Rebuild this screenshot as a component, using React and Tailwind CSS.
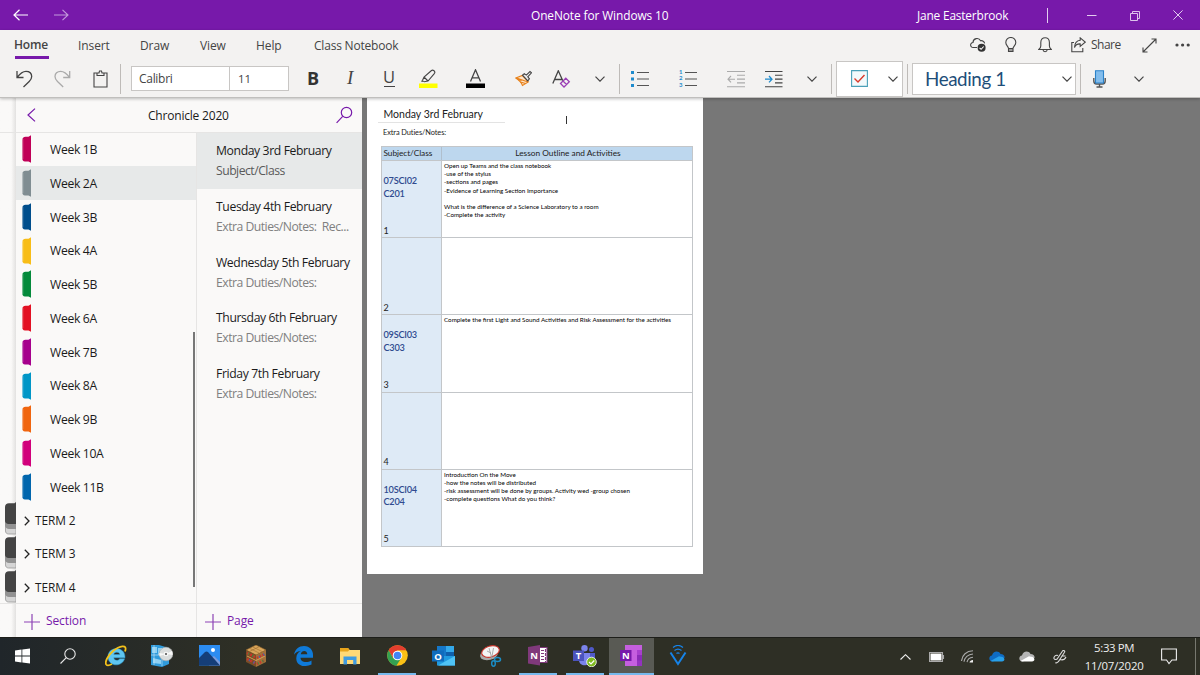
import React from "react";
import clsx from "clsx";

const sections = [
  { name: "Week 1B", color: "#c00057" },
  { name: "Week 2A", color: "#808d92" },
  { name: "Week 3B", color: "#004e8c" },
  { name: "Week 4A", color: "#f8bd17" },
  { name: "Week 5B", color: "#048a3b" },
  { name: "Week 6A", color: "#e31123" },
  { name: "Week 7B", color: "#a6008d" },
  { name: "Week 8A", color: "#0096c7" },
  { name: "Week 9B", color: "#f0650f" },
  { name: "Week 10A", color: "#d1007b" },
  { name: "Week 11B", color: "#0166ad" },
];

const groups = ["TERM 2", "TERM 3", "TERM 4"];

const pages = [
  { title: "Monday 3rd February", preview: "Subject/Class" },
  { title: "Tuesday 4th February", preview: "Extra Duties/Notes:\u00a0 Rec..." },
  { title: "Wednesday 5th February", preview: "Extra Duties/Notes:" },
  { title: "Thursday 6th February", preview: "Extra Duties/Notes:" },
  { title: "Friday 7th February", preview: "Extra Duties/Notes:" },
];

const lessons = [
  {
    code: "07SCI02",
    room: "C201",
    lines: [
      "Open up Teams and the class notebook",
      "-use of the stylus",
      "-sections and pages",
      "-Evidence of Learning Section Importance",
      "",
      "What is the difference of a Science Laboratory to a room",
      "-Complete the activity",
    ],
  },
  { code: "", room: "", lines: [] },
  {
    code: "09SCI03",
    room: "C303",
    lines: ["Complete the first Light and Sound Activities and Risk Assessment for the activities"],
  },
  { code: "", room: "", lines: [] },
  {
    code: "10SCI04",
    room: "C204",
    lines: [
      "Introduction On the Move",
      "-how the notes will be distributed",
      "-risk assessment will be done by groups. Activity wed -group chosen",
      "-complete questions What do you think?",
    ],
  },
];

const Svg = ({ w, h, className, children }) => (
  <svg
    width={w}
    height={h}
    viewBox={`0 0 ${w} ${h}`}
    fill="none"
    stroke="#444"
    strokeWidth="1.1"
    className={clsx("shrink-0", className)}
  >
    {children}
  </svg>
);

const Chevron = ({ className }) => (
  <Svg w={10} h={6} className={className}>
    <path d="M.5.7 5 5.2 9.5.7" stroke="#444" strokeWidth="1.2" />
  </Svg>
);

const Divider = ({ className }) => <div className={clsx("h-[30px] w-px shrink-0 bg-[#bebbb8]", className)} />;

const TitleBar = () => (
  <header className="flex h-[30px] items-center bg-[#7719aa] text-[11.9px] tracking-[-0.1px] text-white">
    <Svg w={15} h={12} className="ml-[13px]">
      <path d="M15 6H1M6.5.8 1 6l5.500 5.200" stroke="#fff" strokeWidth="1.2" />
    </Svg>
    <Svg w={15} h={12} className="ml-[26px]">
      <path d="M0 6h14M8.500.8 14 6l-5.500 5.200" stroke="#c49bdc" strokeWidth="1.1" />
    </Svg>
    <span className="ml-[462px] w-[386px] whitespace-nowrap pt-[2px]">OneNote for Windows 10</span>
    <span className="w-[130px] whitespace-nowrap pt-[2px] tracking-[-0.18px]">Jane Easterbrook</span>
    <div className="h-[15px] w-px bg-[#e3cdef]" />
    <Svg w={10} h={10} className="ml-[39px]">
      <path d="M0 5.500h9.500" stroke="#e3cdef" strokeWidth="1" />
    </Svg>
    <Svg w={11} h={11} className="ml-[33px]">
      <path d="M.5 3.500h7v7h-7zM2.500 3.500v-2h7v7h-2" stroke="#ddc3ec" strokeWidth="1" />
    </Svg>
    <Svg w={10} h={10} className="ml-[32px]">
      <path d="m.4.4 9.200 9.200M9.600.4.4 9.600" stroke="#e3cdef" strokeWidth="1" />
    </Svg>
  </header>
);

const Tabs = () => (
  <nav className="flex h-[30px] items-center text-[12px] tracking-[-0.1px] text-[#444]">
    <div className="ml-[14px] w-[64px] pt-[5px]">
      <span className="block leading-[17px] font-semibold tracking-[-0.2px]">Home</span>
      <div className="ml-px mt-[3px] h-[3px] w-[34px] bg-[#7719aa]" />
    </div>
    <span className="w-[62px] pt-px">Insert</span>
    <span className="w-[60px] pt-px">Draw</span>
    <span className="w-[56px] pt-px">View</span>
    <span className="w-[58px] pt-px">Help</span>
    <span className="w-[656px] pt-px tracking-[-0.2px]">Class Notebook</span>
    <Svg w={17} h={16}>
      <path d="M7 10.500H3.200a2.500 2.500 0 0 1-.2-5 4 4 0 0 1 7.600-1.700 3.200 3.200 0 0 1 4 2.500" />
      <circle cx="11.600" cy="10.800" r="4" fill="#333" stroke="none" />
      <path d="m9.600 10.800 1.500 1.500 2.600-2.800" stroke="#fff" />
    </Svg>
    <Svg w={12} h={16} className="ml-[18px]">
      <path d="M3.500 11.500c0-2-2.700-3-2.700-6a5 5 0 0 1 10 0c0 3-2.800 4-2.800 6zM3.500 11.500v3h4.500v-3M3.500 13H8" />
    </Svg>
    <Svg w={14} h={16} className="ml-[21px]">
      <path d="M.8 12.500h12.500c-1.300-1.200-1.900-2-1.900-3.500V5.500c0-3-1.800-4.800-4.300-4.800S2.800 2.500 2.800 5.500V9c0 1.500-.7 2.300-2 3.500zM5 12.800c.2 2.500 4 2.500 4.200 0" />
    </Svg>
    <Svg w={15} h={16} className="ml-[19px]">
      <path d="M3 5.500H.8v9.300h11V11M9.200.8l5 4.300-5 4.200V6.900C6.300 6.700 4.500 8 3.500 10.500 3.700 6 6 3.500 9.200 3.200z" />
    </Svg>
    <span className="ml-[5px] w-[51px] tracking-[-0.5px]">Share</span>
    <Svg w={15} h={15}>
      <path d="M1 14 14 1M9.500 1H14v4.500M1 9.500V14h4.500" />
    </Svg>
    <Svg w={16} h={4} className="ml-[18px]">
      <g fill="#444" stroke="none">
        <circle cx="2" cy="2" r="1.600" />
        <circle cx="7.600" cy="2" r="1.600" />
        <circle cx="13.200" cy="2" r="1.600" />
      </g>
    </Svg>
  </nav>
);

const Toolbar = () => (
  <div className="flex h-[37px] items-center text-[#444]">
    <Svg w={18} h={18} className="ml-[16px]">
      <path d="M1 1v6.500h6.500M1.300 7.200C4 3.500 7 1.300 10 1.300c3.500 0 5.700 2.200 5.700 5.200 0 2-.8 3.300-2.500 5L7.500 17" strokeWidth="1.300" />
    </Svg>
    <Svg w={18} h={18} className="ml-[20px]">
      <path
        d="M15.700 1v6.500H9.200M15.400 7.200C12.700 3.500 9.700 1.300 6.700 1.300 3.200 1.300 1 3.500 1 6.500c0 2 .8 3.300 2.500 5L9.200 17"
        stroke="#aaa"
        strokeWidth="1.300"
      />
    </Svg>
    <Svg w={15} h={18} className="ml-[21px]">
      <path d="M4 3H1v14h13V3h-3M4 5.500V3h2l.5-2h2L9 3h2v2.500z" />
    </Svg>
    <Divider className="ml-[12px]" />
    <div className="ml-[10px] flex h-[25px] w-[158px] items-center border border-[#c8c6c4] bg-white text-[12px]">
      <span className="flex h-full w-[98px] items-center border-r border-[#c8c6c4] pt-px pl-[7px] tracking-[-0.3px]">Calibri</span>
      <span className="pt-px pl-[8px] text-[11.500px] tracking-[-0.2px]">11</span>
    </div>
    <span className="mt-[-2px] ml-[18px] w-[40px] text-[18px] leading-[24px] font-bold text-[#333]">B</span>
    <span className="mt-[-1px] w-[36px] font-['Liberation_Serif',serif] text-[19px] leading-[24px] italic">I</span>
    <span className="mt-[-2px] flex w-[12px] flex-col items-center">
      <span className="text-[16.500px] leading-[18px]">U</span>
      <span className="h-px w-[11px] bg-[#444]" />
    </span>
    <Svg w={19} h={20} className="ml-[24px]">
      <path d="M3 12.500 5 8l7.500-6.500c1.500-1.200 4.200 1 3 2.800L9 12l-4 .8M5 8l4 4" />
      <path d="m3 11-.8 2h4.500z" fill="#666" stroke="none" />
      <path d="M0 14.500h18.500v4.500H0z" fill="#ff0" stroke="none" />
    </Svg>
    <Svg w={19} h={20} className="ml-[28px]">
      <path d="M4.500 12.500 9.500.8 14.500 12.500M6.200 8.800h6.600" strokeWidth="1.300" />
      <path d="M0 14.500h19v4.500H0z" fill="#000" stroke="none" />
    </Svg>
    <Svg w={17} h={17} className="ml-[30px]">
      <path d="m.8 8 6.500-2.500 6 6.500L7.500 15.500C6.500 12.500 4 10 .8 8z" fill="#fde3c6" stroke="#e8811a" />
      <path d="m3 9.500 3.500 1M5.500 12l5 1.500M1.500 8l11.500 4" stroke="#e8811a" />
      <path d="m7.500 5.200 1.800-1.600 2 1.500L15 1.500l1.500 1.300-3.700 4 1.600 2-1.600 2z" fill="#eee" />
    </Svg>
    <Svg w={19} h={18} className="ml-[20px]">
      <path d="M.8 13.500 6.300.8l4.500 10M2.500 9.500h7.300" strokeWidth="1.300" />
      <path d="m8.500 13.500 5.300-5.300 3.500 3.500-5.300 5.300zM11 11l3.500 3.500" stroke="#9b3fb5" strokeWidth="1.300" />
    </Svg>
    <Chevron className="ml-[24px]" />
    <Divider className="ml-[14px]" />
    <Svg w={18} h={18} className="ml-[11px]">
      <path d="M6 2.500h12M6 9h12M6 15.500h12" stroke="#555" />
      <path d="M0 1h3v3H0zM0 7.500h3v3H0zM0 14h3v3H0z" fill="#1e8bcd" stroke="none" />
    </Svg>
    <div className="ml-[30px] flex h-[20px] w-[18px] items-center gap-[2px]">
      <span className="w-[4px] font-[Lato,sans-serif] text-[6px] leading-[6.500px] font-bold text-[#1e8bcd]">
        1<br />2<br />3
      </span>
      <Svg w={12} h={18}>
        <path d="M0 2.500h12M0 9h12M0 15.500h12" stroke="#555" />
      </Svg>
    </div>
    <Svg w={18} h={18} className="ml-[30px]">
      <path d="M0 1.500h18M10 5.300h8M10 9.100h8M10 12.900h8M0 16.700h18M8 9.200H1M4 6 1 9.200l3 3.200" stroke="#aaa" />
    </Svg>
    <Svg w={18} h={18} className="ml-[20px]">
      <path d="M0 1.500h17.500M10 5.300h7.500M10 9.100h7.500M10 12.900h7.500M0 16.700h17.500" stroke="#444" />
      <path d="M0 9.200h7M4 6l3 3.200-3 3.200" stroke="#1e8bcd" strokeWidth="1.300" />
    </Svg>
    <Chevron className="ml-[24px]" />
    <Divider className="ml-[14px]" />
    <div className="ml-[4px] flex h-[36px] w-[67px] shrink-0 items-center border border-[#c8c6c4] bg-white">
      <Svg w={17} h={17} className="ml-[14px]">
        <path d="M.6.6h15.800v15.800H.6z" stroke="#4ba0b8" fill="#f3fafc" />
        <path d="m3.500 8.500 3.500 3.500 6.500-7" stroke="#d93a2b" strokeWidth="1.400" />
      </Svg>
      <Chevron className="ml-[20px]" />
    </div>
    <Divider className="ml-[4px]" />
    <div className="ml-[4px] flex h-[32px] w-[164px] shrink-0 items-center border border-[#c8c6c4] bg-white">
      <span className="w-[149px] pt-px pl-[12px] font-[Lato,sans-serif] text-[18.800px] tracking-[-0.4px] text-[#1e4e79]">Heading 1</span>
      <Chevron />
    </div>
    <Divider className="ml-[4px]" />
    <Svg w={13} h={18} className="ml-[12px]">
      <path d="M.8 8v3c0 2 1.200 3 2.700 3h6c1.500 0 2.700-1 2.700-3V8M6.500 14v3M3.500 17h6" stroke="#555" strokeWidth="1.400" />
      <path d="M2.500.8h8V13h-8z" fill="#83bdec" stroke="#2b82c9" />
    </Svg>
    <Chevron className="ml-[28px]" />
  </div>
);

const SectionTab = ({ color }) => (
  <Svg w={9} h={28} className="ml-[6px]">
    <path d="M9 .3v27.400L6.500 26.500H3C1 26.300.3 25 .3 23.500V5C.3 3 1.500 1.800 3.500 1.700h3z" fill={color} stroke="none" />
    <path d="M.8 4v20" stroke="#fff" strokeOpacity=".3" strokeWidth="1" />
  </Svg>
);

// Stack of tabs that marks a collapsed section group
const GroupTab = () => (
  <Svg w={11} h={33.75}>
    <path d="M11 32H3.500C1.500 32 .5 30.500.5 29V22H11z" fill="#d5d5d5" stroke="#999" strokeWidth=".8" />
    <path d="M11 27H4C2 27 0 25.500 0 24v-6h11z" fill="#929292" stroke="none" />
    <path d="M11 0 9.500 1.300H4C1.500 1.500 0 2.800 0 5v14c0 1.500 1.500 3 3.500 3H11z" fill="#444" stroke="none" />
  </Svg>
);

const AddButton = ({ label }) => (
  <div className="flex h-[34px] items-center border-t border-[#e6e5e4] pl-[8px] text-[12px] tracking-[-0.1px] text-[#7719aa]">
    <Svg w={16} h={16} className="mt-[2px]">
      <path d="M0 8h16M8 0v16" stroke="#8d43b5" strokeWidth="1.200" />
    </Svg>
    <span className="ml-[6px] pt-px">{label}</span>
  </div>
);

const NavPane = () => (
  <aside className="flex h-full w-[362px] shrink-0 bg-[#faf9f8] text-[#1b1b1b]">
    <div className="flex w-[16px] flex-col items-end bg-gradient-to-r from-[#faf9f8] from-70% to-[#e2e1e0]">
      <div className="h-[35px] w-full border-b border-[#e6e5e4]" />
      <div className="mt-[369px] flex w-full flex-col items-end border-b border-[#e6e5e4]">
        {groups.map((g) => (
          <GroupTab key={g} />
        ))}
      </div>
    </div>
    <div className="flex w-[346px] flex-col">
      <div className="flex h-[35px] shrink-0 items-center border-b border-[#e6e5e4]">
        <Svg w={9} h={14} className="ml-[11px]">
          <path d="M8 .6 1 7l7 6.400" stroke="#7719aa" strokeWidth="1.200" />
        </Svg>
        <span className="ml-[112px] w-[188px] pt-[2px] text-[12px] tracking-[-0.2px]">Chronicle 2020</span>
        <Svg w={17} h={18}>
          <circle cx="10.500" cy="6.500" r="5.200" stroke="#7719aa" strokeWidth="1.200" />
          <path d="M6.700 10.300.6 16.800" stroke="#7719aa" strokeWidth="1.200" />
        </Svg>
      </div>
      <div className="flex flex-1">
        <div className="flex w-[181px] flex-col border-r border-[#e6e5e4]">
          <div className="relative h-[470px] text-[12.200px] tracking-[-0.35px]">
            <div className="-mt-[0.600px]">
              {sections.map((s, i) => (
                <div key={s.name} className={clsx("flex h-[33.75px] items-center", i === 1 && "bg-[#e7e9e9]")}>
                  <SectionTab color={s.color} />
                  <span className="ml-[19px] pt-[2px]">{s.name}</span>
                </div>
              ))}
              {groups.map((g) => (
                <div key={g} className="flex h-[33.75px] items-center">
                  <Svg w={6} h={10} className="ml-[8px]">
                    <path d="M.8.7 5 5 .8 9.300" stroke="#222" strokeWidth="1.300" />
                  </Svg>
                  <span className="ml-[5px] text-[11.900px] tracking-[-0.1px]">{g}</span>
                </div>
              ))}
            </div>
            <div className="absolute top-[199px] right-[1px] h-[255px] w-[2px] bg-[#777]" />
          </div>
          <AddButton label="Section" />
        </div>
        <div className="flex w-[165px] flex-col">
          <div className="h-[470px]">
            {pages.map((p, i) => (
              <div key={p.title} className={clsx("h-[55.750px] pt-[9px] pl-[19px] text-[12.200px] leading-[18px] whitespace-nowrap", i === 0 && "bg-[#e7e9e9]")}>
                <div className="tracking-[-0.38px]">{p.title}</div>
                <div className={clsx("pt-[2px] tracking-[-0.5px]", i === 0 ? "text-[#5a5a5a]" : "text-[#808080]")}>
                  {p.preview}
                </div>
              </div>
            ))}
          </div>
          <AddButton label="Page" />
        </div>
      </div>
    </div>
  </aside>
);

const NotePage = () => (
  <main className="ml-[5px] h-[476px] w-[336px] bg-white font-[Lato,sans-serif] text-[#222]">
    <div className="ml-[11px] flex h-[25px] w-[200px] items-end">
      <div className="h-[25px] w-[127px] border-b border-[#e3e3e3] pt-[8px] pl-[5.500px] text-[10.500px] leading-[16px] whitespace-nowrap">
        Monday 3rd February
      </div>
      <div className="mb-[-1px] ml-[61px] h-[8px] w-px shrink-0 bg-[#333]" />
    </div>
    <p className="mt-[4px] ml-[16px] text-[7.400px] leading-[12px] tracking-[-0.08px]">Extra Duties/Notes:</p>
    <div className="mt-[7px] ml-[14px] w-[312px] border-t border-l border-[#c3c6c9]">
      <div className="flex h-[14px] border-b border-[#c3c6c9] bg-[#bdd7ee] text-[8.300px] leading-[13px]">
        <div className="w-[60px] border-r border-[#b0bfcd] pl-[1.500px] tracking-[-0.06px]">Subject/Class</div>
        <div className="flex-1 border-r border-[#c3c6c9] pl-[2px] text-center">Lesson Outline and Activities</div>
      </div>
      {lessons.map((l, i) => (
        <div key={i} className="flex h-[77.200px] border-b border-[#c3c6c9]">
          <div className="flex w-[60px] flex-col border-r border-[#c3c6c9] bg-[#deeaf6] pl-[1.500px]">
            <div className="h-[63.500px] pt-[14px] text-[9.200px] leading-[12.500px] font-semibold tracking-[-0.25px] text-[#2f4b8f]">
              <div>{l.code}</div>
              <div>{l.room}</div>
            </div>
            <span className="text-[9px] leading-[12px]">{i + 1}</span>
          </div>
          <div className="flex-1 border-r border-[#c3c6c9] pt-[1px] pl-[2px] text-[6.250px] leading-[8.200px] whitespace-nowrap text-[#000]">
            {l.lines.map((line, n) => (
              <div key={n} className="h-[8.200px]">{line}</div>
            ))}
          </div>
        </div>
      ))}
    </div>
  </main>
);

const WindowsLogo = () => (
  <Svg w={15} h={16}>
    <path d="m0 2.500 6.500-.9v6H0zM7.300 1.500 15 .4v7.200H7.300zM0 8.400h6.500v6L0 13.500zM7.300 8.400H15v7.200l-7.700-1.100z" fill="#fff" stroke="none" />
  </Svg>
);

const SearchGlyph = () => (
  <Svg w={16} h={16} className="-ml-[3px]">
    <circle cx="10" cy="6" r="5.200" stroke="#e8e8e8" />
    <path d="M6.300 9.700.5 15.500" stroke="#e8e8e8" />
  </Svg>
);

const InternetExplorer = () => (
  <Svg w={22} h={22} className="-ml-px">
    <path
      d="M20 12.800H8.800c.3 3 4.700 3.300 5.800 1h5C16.500 22.800 3 21.500 3 11.800 3 .8 20.500.6 20 12.800zM8.800 9.500h6c-.3-3-5.700-3-6 0z"
      fill="#5fc5f0"
      stroke="#2a9fd8"
      strokeWidth=".5"
    />
    <path d="M20 6.500c3-8-6-5.500-12-.5C3 10.500-.5 17 1.200 19.500c1 1.300 3.500.8 5.800-.5" stroke="#f3c11b" strokeWidth="1.800" />
  </Svg>
);

const SoftwareCenter = () => (
  <Svg w={22} h={22} className="-ml-px">
    <path d="M0 0h8l10 3v16l-7 3-11-2z" fill="#2f9bdc" stroke="none" />
    <path d="M1 2h5v6H1zM7 3h4v7H7zM2 13l8 2v4l-8-1z" fill="#8fd0f2" stroke="none" />
    <path d="M3 0v20M0 10h12M11 3v18" stroke="#c9e9fa" strokeWidth=".6" />
    <circle cx="15" cy="9" r="6.800" fill="#d9dcdc" stroke="#aaa" strokeWidth=".6" />
    <path d="m15 9 6-3a7 7 0 0 1 .6 4zM15 9l-6.500 2-.2-3z" fill="#f8f8f8" stroke="none" />
    <circle cx="15" cy="9" r="1.800" fill="#777" stroke="#fff" />
  </Svg>
);

const Photos = () => (
  <Svg w={21} h={21}>
    <path d="M0 0h21v20.500H0z" fill="#2c8cf0" stroke="none" />
    <path d="m10 14 5-3 6 6v3.500H10z" fill="#7d9ad8" stroke="none" />
    <path d="m0 13 6-6c1-.8 2-.8 3 0l12 13.500H0z" fill="#153e78" stroke="none" />
    <circle cx="14" cy="5" r="2" fill="#fff" stroke="none" />
  </Svg>
);

const Bookshelf = () => (
  <Svg w={20} h={22} className="-ml-[2px]">
    <path d="m0 5 10-5 10 5-10 5z" fill="#d9a65b" stroke="#8d6129" strokeWidth=".6" />
    <path d="M0 5v12l10 5V10z" fill="#7a4e26" stroke="none" />
    <path d="M20 5v12l-10 5V10z" fill="#a1713a" stroke="none" />
    <path d="m4 3.500 9 4.500M7 2l9 4.500M3.500 6.500l10-5" stroke="#9c6c30" strokeWidth=".6" />
    <path d="m1 8 8 4M1 14l8 4" stroke="#c9352b" strokeWidth="2.500" strokeDasharray="2 1.500" />
    <path d="m11 13 8-4M11 19l8-4" stroke="#c9352b" strokeWidth="2.500" strokeDasharray="1.500 1.500" />
    <path d="m1 11 9 4.500L19 11" stroke="#d9a65b" strokeWidth=".9" />
    <path d="m2 8.500 7 3.500M12 18.500l7-3.500" stroke="#3f8a45" strokeWidth="2.500" strokeDasharray="1 4" />
    <path d="m3 15 6 3M13 12l6-3" stroke="#3d65b5" strokeWidth="2.500" strokeDasharray="1 4" />
  </Svg>
);

const Edge = () => (
  <Svg w={19} h={20}>
    <path
      d="M0 8.800C1 3 5 0 10 0c6 0 9 4.500 9 9v2.800H6.500c.2 5 6.800 5.300 11 2.700v3.900C10.500 22 2 19.500 2.300 12 2.400 8.300 4.300 6 7.300 4.800 4 5 1.500 6.500 0 8.800zM6.700 8.300h6.600c0-4.500-6-4.500-6.600 0z"
      fill="#0f7ad8"
      stroke="none"
    />
  </Svg>
);

const Explorer = () => (
  <Svg w={20} h={18} className="mt-px">
    <path d="M0 1h8l1.500 2H20v14H0z" fill="#ffd976" stroke="none" />
    <path d="M0 1h8l1.500 1.800L8 4.500H0z" fill="#e8a51b" stroke="none" />
    <path d="M3.500 17.500V9.500h13v8h-3.300v-4.500H7v4.500z" fill="#3f9be0" stroke="none" />
  </Svg>
);

const Chrome = () => (
  <Svg w={21} h={21}>
    <circle cx="10.500" cy="10.500" r="10.300" fill="#fbc116" stroke="none" />
    <path d="M1.600 5.300a10.300 10.300 0 0 1 17.800 0h-9L6 13z" fill="#e33e2e" stroke="none" />
    <path d="M1.600 5.300a10.300 10.300 0 0 0 7.700 15.400l5-7.700-3.800 2-4.500-2z" fill="#34a152" stroke="none" />
    <circle cx="10.500" cy="10.500" r="4.800" fill="#fff" stroke="none" />
    <circle cx="10.500" cy="10.500" r="3.800" fill="#4285f4" stroke="none" />
  </Svg>
);

const AppLetter = ({ x, y, children }) => (
  <text x={x} y={y} fill="#fff" stroke="none" fontSize="9.5" fontWeight="700" textAnchor="middle">
    {children}
  </text>
);

const Outlook = () => (
  <Svg w={23} h={20} className="-ml-px">
    <path d="M5 0h17v13H5z" fill="#1577c8" stroke="none" />
    <path d="M14 0h8v6h-8z" fill="#34a9ea" stroke="none" />
    <path d="M14 6h8v6h-8z" fill="#0f60ac" stroke="none" />
    <path d="M5 10h18v9.500H5z" fill="#209be0" stroke="none" />
    <path d="m23 10-17 9.500h17z" fill="#4fc3f5" stroke="none" />
    <path d="M0 4.500h12v11H0z" fill="#0f6cbd" stroke="none" />
    <AppLetter x="6" y="13.500">O</AppLetter>
  </Svg>
);

const SnippingTool = () => (
  <Svg w={22} h={22}>
    <ellipse cx="9" cy="9.500" rx="9" ry="5.500" transform="rotate(-14 9 9.500)" fill="#aaa" stroke="none" />
    <ellipse cx="10.500" cy="6.500" rx="9" ry="5.500" transform="rotate(-16 10.500 6.500)" fill="#f4f4f4" stroke="#c9352b" />
    <path d="m9 3 3 11M13.500 3l-2 11M7 6l4 2" stroke="#999" strokeWidth=".8" />
    <ellipse cx="17.500" cy="14.500" rx="3" ry="2" stroke="#1b8cc4" strokeWidth="1.500" />
    <ellipse cx="13.500" cy="18.500" rx="1.800" ry="2.700" stroke="#1b8cc4" strokeWidth="1.500" />
  </Svg>
);

const OneNoteDesktop = () => (
  <Svg w={20} h={22} className="mt-px">
    <path d="M10 2.500h9v15h-9z" fill="#fff" stroke="#80397b" />
    <path d="M13 5.500h3M13 8.500h3M13 11.500h3M13 14.500h3M17.500 4v13" stroke="#80397b" strokeDasharray="3 1" />
    <path d="m0 2 12-2v20.500L0 18.500z" fill="#80397b" stroke="none" />
    <AppLetter x="6" y="13.700">N</AppLetter>
  </Svg>
);

const Teams = () => (
  <Svg w={24} h={22}>
    <circle cx="18.500" cy="4.500" r="2.500" fill="#5059c9" stroke="none" />
    <circle cx="11.500" cy="3.200" r="3.200" fill="#7b83eb" stroke="none" />
    <path d="M15 8h7v7c0 2-2 4-5 4z" fill="#5059c9" stroke="none" />
    <path d="M6 8h11v7c0 7-11 7-11 0z" fill="#7b83eb" stroke="none" />
    <path d="M0 5.500h11v10.500H0z" fill="#4b53bc" stroke="none" />
    <AppLetter x="5.500" y="14">T</AppLetter>
    <circle cx="18.500" cy="17" r="4.800" fill="#7fba1e" stroke="#fff" strokeWidth=".8" />
    <path d="m16 17 2 2 3.300-3.500" stroke="#fff" strokeWidth="1.200" />
  </Svg>
);

const OneNoteApp = () => (
  <Svg w={22} h={21}>
    <path d="M5 0h17v21H5z" fill="#c55fdf" stroke="none" />
    <path d="M17 5h5v5h-5z" fill="#a83fce" stroke="none" />
    <path d="M17 10h5v6h-5z" fill="#8a2bb8" stroke="none" />
    <path d="M17 15.500h5V21h-5z" fill="#9332bf" stroke="none" />
    <path d="M0 5h11.500v11H0z" fill="#7719aa" stroke="none" />
    <AppLetter x="5.800" y="14">N</AppLetter>
  </Svg>
);

const VpnApp = () => (
  <Svg w={18} h={21}>
    <path d="M1.500 7.500 9 19l7.500-11.500" stroke="#1683e8" strokeWidth="2" />
    <path d="M4 2.500c3-2.500 7-2.500 10 0M5.500 5.500c2.300-1.800 4.700-1.800 7 0M7.500 8.500c1-.8 2-.8 3 0" stroke="#1683e8" strokeWidth="1.200" />
  </Svg>
);

const apps = [
  { id: "start", Icon: WindowsLogo },
  { id: "search", Icon: SearchGlyph },
  { id: "ie", Icon: InternetExplorer },
  { id: "software", Icon: SoftwareCenter },
  { id: "photos", Icon: Photos },
  { id: "books", Icon: Bookshelf },
  { id: "edge", Icon: Edge },
  { id: "explorer", Icon: Explorer },
  { id: "chrome", Icon: Chrome, running: true },
  { id: "outlook", Icon: Outlook },
  { id: "snip", Icon: SnippingTool },
  { id: "onenote-desktop", Icon: OneNoteDesktop, running: true },
  { id: "teams", Icon: Teams, running: true },
  { id: "onenote", Icon: OneNoteApp, active: true },
  { id: "vpn", Icon: VpnApp },
];

const Cloud = ({ back, front }) => (
  <Svg w={16} h={11}>
    <path d="M3.500 10.500C-.5 10.500-.8 5 3 4.500 4 0 9.500-.8 11.500 3c3 0 4.500 2 4 4z" fill={back} stroke="none" />
    <path d="M3.500 10.500 1.500 10 10 5.300l2 .5c3.500-.3 5 4.700 1 4.700z" fill={front} stroke="none" />
  </Svg>
);

const Taskbar = () => (
  <footer className="flex h-[38px] items-stretch border-t border-[#1d1e1a] bg-gradient-to-r from-[#20262a] to-[#2e2f25] to-20% text-[#eee]">
    <div className="-ml-px flex">
      {apps.map(({ id, Icon, running, active }) => (
        <div key={id} className={clsx("flex w-[46.850px] flex-col items-center", active && "bg-[#595a54] bg-clip-content px-[0.700px]")}>
          <div className="flex h-[35px] items-center">
            <Icon />
          </div>
          <div className={clsx("h-[2px]", running && "w-[38px] bg-[#76b9ed]", active && "w-full bg-[#76b9ed]")} />
        </div>
      ))}
    </div>
    <div className="ml-[198px] flex h-[37px] items-center">
      <Svg w={11} h={6}>
        <path d="M.5 5.500 5.500.7l5 4.800" stroke="#eee" />
      </Svg>
      <Svg w={16} h={10} className="ml-[18px]">
        <path d="M.5.5h13v9H.5z" stroke="#aaa" />
        <path d="M1.500 1.500h11v7h-11z" stroke="none" fill="#fff" />
        <path d="M14.500 3v4" stroke="#aaa" />
      </Svg>
      <Svg w={13} h={13} className="ml-[16px]">
        <path d="M.5 11C1 5 5.500 1 12 .8M3 11.800C3.500 7.500 7 4.200 12 4M6 12.200c.5-2.700 2.800-4.700 6-5" stroke="#aaa" />
        <path d="M8.500 12.500c.3-1.300 1.500-2.500 3.500-2.500v2.500z" fill="#eee" stroke="none" />
      </Svg>
      <div className="ml-[15px]">
        <Cloud back="#0f6cc4" front="#28a0ea" />
      </div>
      <div className="ml-[14px]">
        <Cloud back="#b5b5b5" front="#fff" />
      </div>
      <Svg w={14} h={14} className="ml-[18px]">
        <path
          d="M5 5.500c-2-1-4.500 1-4 3 .6 1.500 3 1.200 3.500 0L9.500 1c1-1.200 2.800 0 2 1.300L6.500 10c-1 2-3 3.500-4 2.500M7 9.500c3 1 5-.5 6-2.500M8.500 6h4"
          stroke="#ddd"
        />
      </Svg>
      <div className="ml-[16px] flex w-[63px] flex-col items-center text-[11.400px] leading-[17.500px] tracking-[-0.15px] whitespace-nowrap">
        <span className="tracking-[-0.35px]">5:33 PM</span>
        <span>11/07/2020</span>
      </div>
      <Svg w={16} h={17} className="ml-[15px]">
        <path d="M.6 1h14.800v11H11l-3 3.500L5.500 12H.6z" stroke="#eee" />
      </Svg>
    </div>
    <div className="ml-[18px] w-px bg-[#77786f]" />
  </footer>
);

const App = () => {
  return (
    <div className="flex h-[675px] w-[1200px] flex-col overflow-hidden bg-[#777] font-['Open_Sans','Noto_Sans',sans-serif]">
      <TitleBar />
      <div className="z-10 h-[68px] border-b border-[#c0bfbd] bg-[#f3f2f1] shadow-[0_1px_3px_rgba(0,0,0,0.25)]">
        <Tabs />
        <Toolbar />
      </div>
      <div className="flex h-[539px]">
        <NavPane />
        <NotePage />
      </div>
      <Taskbar />
    </div>
  );
};

export default App;
